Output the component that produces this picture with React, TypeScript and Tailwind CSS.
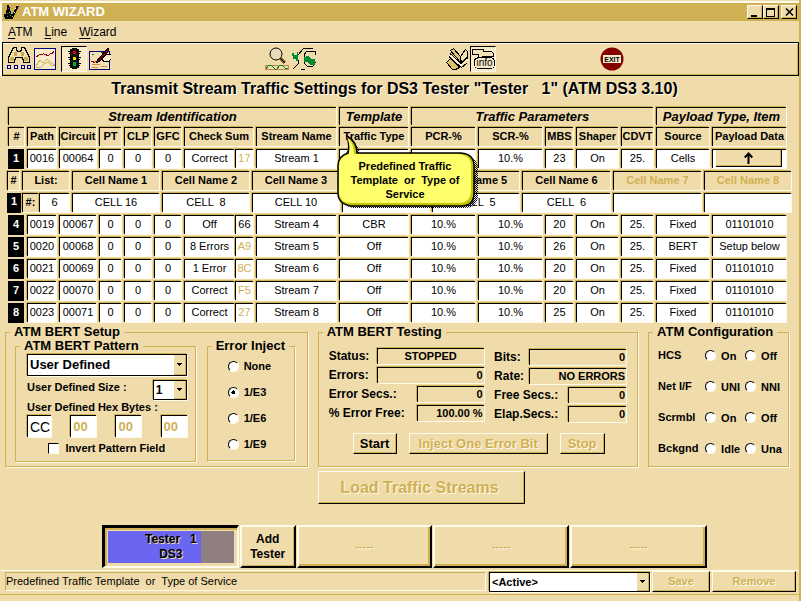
import React from "react";

const cellBox =
  "flex h-[19px] items-center justify-center overflow-hidden whitespace-pre border-l border-t border-black px-px pb-[3px] text-[11px] leading-[14px] shadow-[-1px_-1px_#cfb053,1px_1px_#fffbe6]";
const raised =
  "border-2 border-t-[#fffbea] border-l-[#fffbea] border-r-black border-b-black shadow-[inset_-1px_-1px_#cfb053]";
const raisedThin =
  "border border-t-[#fffbea] border-l-[#fffbea] border-r-black border-b-black shadow-[inset_-1px_-1px_#cfb053]";
const engraved = "text-[#cfb053] [text-shadow:1px_1px_#fffbea]";

const streamCols = [19, 32, 40, 25, 30, 30, 51, 21, 83, 72, 67, 67, 31, 45, 35, 56, 77];
const cellCols = [15, 17, 33, 90, 90, 90, 90, 90, 91, 91, 90];

type Stream = { id: number; values: string[]; sumActive?: boolean };

const firstStream: Stream = {
  id: 1,
  values: ["0016", "00064", "0", "0", "0", "Correct", "17", "Stream 1", "", "", "10.%", "23", "On", "25.", "Cells"],
};
const streams: Stream[] = [
  { id: 4, sumActive: true, values: ["0019", "00067", "0", "0", "0", "Off", "66", "Stream 4", "CBR", "10.%", "10.%", "20", "On", "25.", "Fixed", "01101010"] },
  { id: 5, values: ["0020", "00068", "0", "0", "0", "8 Errors", "A9", "Stream 5", "Off", "10.%", "10.%", "26", "On", "25.", "BERT", "Setup below"] },
  { id: 6, values: ["0021", "00069", "0", "0", "0", "1 Error", "8C", "Stream 6", "Off", "10.%", "10.%", "20", "On", "25.", "Fixed", "01101010"] },
  { id: 7, values: ["0022", "00070", "0", "0", "0", "Correct", "F5", "Stream 7", "Off", "10.%", "10.%", "20", "On", "25.", "Fixed", "01101010"] },
  { id: 8, values: ["0023", "00071", "0", "0", "0", "Correct", "27", "Stream 8", "Off", "10.%", "10.%", "25", "On", "25.", "Fixed", "01101010"] },
];

function Cols({ widths }: { widths: number[] }) {
  const total = widths.reduce((a, b) => a + b, 0);
  return (
    <colgroup>
      {widths.map((w, i) => (
        <col key={i} style={{ width: `${(w / total) * 100}%` }} />
      ))}
    </colgroup>
  );
}

function Head({ children, span = 1, dim = false }: { children: React.ReactNode; span?: number; dim?: boolean }) {
  return (
    <th colSpan={span} className="h-[22px] p-0 pr-[3px] align-top font-bold">
      <div className={`${cellBox} ${dim ? "text-[#cfb053]" : ""}`}>{children}</div>
    </th>
  );
}

function GroupHead({ children, span }: { children: React.ReactNode; span: number }) {
  return (
    <th colSpan={span} className="h-[20px] p-0 pr-[3px] align-top">
      <div className="h-[18px] whitespace-nowrap border-l border-t border-black text-center text-[13px] font-bold italic leading-[17px] shadow-[-1px_-1px_#cfb053,1px_0_#fffbe6]">
        {children}
      </div>
    </th>
  );
}

function RowNumber({ n }: { n: number }) {
  return (
    <th className="h-[22px] p-0 pr-[3px] align-top">
      <div className="flex h-[20px] items-center justify-center bg-black pb-[2px] text-[11px] font-bold leading-[14px] text-white">{n}</div>
    </th>
  );
}

function Cell({ children, dim = false, tight = false }: { children?: React.ReactNode; dim?: boolean; tight?: boolean }) {
  return (
    <td className={`h-[22px] p-0 align-top ${tight ? "pr-px" : "pr-[3px]"}`}>
      <div className={`${cellBox} bg-white ${dim ? "text-[#cfb053]" : "text-black"}`}>{children}</div>
    </td>
  );
}

function StreamRow({ stream, children }: { stream: Stream; children?: React.ReactNode }) {
  return (
    <tr>
      <RowNumber n={stream.id} />
      {stream.values.map((v, i) => (
        <Cell key={i} tight={i === 5} dim={i === 6 && !stream.sumActive}>
          {v}
        </Cell>
      ))}
      {children}
    </tr>
  );
}

function StreamTables() {
  return (
    <div className="relative">
      <div className="pl-2 pr-[10px]">
        <table className="w-full table-fixed border-separate border-spacing-0">
          <Cols widths={streamCols} />
          <thead>
            <tr>
              <GroupHead span={9}>Stream Identification</GroupHead>
              <GroupHead span={1}>Template</GroupHead>
              <GroupHead span={5}>Traffic Parameters</GroupHead>
              <GroupHead span={2}>Payload Type, Item</GroupHead>
            </tr>
            <tr>
              <Head>#</Head>
              <Head>Path</Head>
              <Head>Circuit</Head>
              <Head>PT</Head>
              <Head>CLP</Head>
              <Head>GFC</Head>
              <Head span={2}>Check Sum</Head>
              <Head>Stream Name</Head>
              <Head>Traffic Type</Head>
              <Head>PCR-%</Head>
              <Head>SCR-%</Head>
              <Head>MBS</Head>
              <Head>Shaper</Head>
              <Head>CDVT</Head>
              <Head>Source</Head>
              <Head>Payload Data</Head>
            </tr>
          </thead>
          <tbody>
            <StreamRow stream={firstStream}>
              <td className="h-[22px] p-0 pr-[3px] align-top">
                <div className="flex h-[19px] border-l border-t border-black bg-white pl-[3px] pr-1 shadow-[-1px_-1px_#cfb053,1px_1px_#fffbe6]">
                  <button aria-label="Payload data" className="flex h-[17px] w-full items-center justify-center border-b border-r border-black bg-[#f0dcaa] shadow-[inset_-1px_-1px_#cfb053]">
                    <svg width="9" height="12" viewBox="0 0 9 12" fill="none" stroke="#000" strokeWidth="2">
                      <path d="M4.500 12V1M.7 5.500 4.500 1.500 8.300 5.500" />
                    </svg>
                  </button>
                </div>
              </td>
            </StreamRow>
          </tbody>
        </table>
      </div>
      <div className="pl-[7px] pr-[5px]">
        <table className="w-full table-fixed border-separate border-spacing-0">
          <Cols widths={cellCols} />
          <thead>
            <tr>
              <Head>#</Head>
              <Head span={2}>List:</Head>
              {[1, 2, 3, 4, 5, 6, 7, 8].map((n) => (
                <Head key={n} dim={n > 6}>{`Cell Name ${n}`}</Head>
              ))}
            </tr>
          </thead>
          <tbody>
            <tr>
              <th className="h-[22px] p-0 pr-px align-top">
                <div className="h-[20px] bg-black text-center text-[11px] font-bold leading-[17px] text-white">1</div>
              </th>
              <th className="h-[22px] p-0 pr-px align-top">
                <div className={cellBox}>#:</div>
              </th>
              {["6", "CELL 16", "CELL  8", "CELL 10", "", "CELL  5", "CELL  6", "", ""].map((c, i) => (
                <Cell key={i}>{c}</Cell>
              ))}
            </tr>
          </tbody>
        </table>
      </div>
      <div className="pl-2 pr-[10px]">
        <table className="w-full table-fixed border-separate border-spacing-0">
          <Cols widths={streamCols} />
          <tbody>
            {streams.map((s) => (
              <StreamRow key={s.id} stream={s} />
            ))}
          </tbody>
        </table>
      </div>
      <div role="tooltip" className="absolute left-[337px] top-[28px] h-[74px] w-[142px]">
        <svg className="absolute inset-0" width="142" height="74" viewBox="0 0 142 74">
          <defs>
            <pattern id="halftone" width="2" height="2" patternUnits="userSpaceOnUse">
              <path d="M0 0h1v1H0zM1 1h1v1H1z" fill="#000" />
            </pattern>
          </defs>
          <path d="M13 4Q22 10 23 20H127Q141 22 141 34V60Q141 73 127 73H17Q8 72 5 65V34Z" fill="url(#halftone)" />
          <path d="M10 1Q20 7 20 18H124Q137 19 137 31V58Q137 71 124 71H14Q1 69 1 58V31Q1 21 11 18Q13 10 10 1Z" fill="#c6c600" stroke="#000" strokeWidth="1.500" />
          <path d="M10 2Q17 8 17 19H121Q134 20 134 31V55Q134 68 121 68H14Q2 68 2 56V31Q2 22 12 19Q14 11 10 2Z" fill="#ffff6b" />
        </svg>
        <p className="relative whitespace-pre pr-[6px] pt-[24px] text-center text-[11px] font-bold leading-[14px]">
          {"Predefined Traffic\nTemplate  or  Type of\nService"}
        </p>
      </div>
    </div>
  );
}

function Group({ title, className = "", children }: { title: string; className?: string; children: React.ReactNode }) {
  return (
    <fieldset className={`min-w-0 border border-[#cfb053] shadow-[1px_1px_#fffbea] ${className}`}>
      <legend className="ml-1 whitespace-nowrap px-1 text-[13px] font-bold leading-[14px]">{title}</legend>
      {children}
    </fieldset>
  );
}

const radioStyle =
  "m-0 h-[11px] w-[11px] shrink-0 appearance-none rounded-full border border-b-[#fffbea] border-l-black border-r-[#fffbea] border-t-black bg-white checked:bg-[radial-gradient(#000_2px,#fff_2px)]";

function Radio({ name, label, checked = false }: { name: string; label: string; checked?: boolean }) {
  return (
    <label className="flex items-center gap-[5px] whitespace-nowrap text-[11px] font-bold leading-[14px]">
      <input type="radio" name={name} defaultChecked={checked} className={radioStyle} />
      {label}
    </label>
  );
}

function Select({ id, label, value, className }: { id: string; label: string; value: string; className: string }) {
  return (
    <div className={`relative border border-black bg-white shadow-[-1px_-1px_#cfb053,1px_1px_#fffbea] ${className}`}>
      <select id={id} aria-label={label} defaultValue={value} className="block h-full w-full appearance-none bg-transparent pl-[2px] font-bold outline-none">
        <option>{value}</option>
      </select>
      <span className="pointer-events-none absolute inset-y-0 right-0 flex w-3 items-center justify-center border-b border-r border-[#cfb053] bg-[#f0dcaa]">
        <svg width="5" height="3" viewBox="0 0 5 3" shapeRendering="crispEdges">
          <path d="M0 0h5v1H4v1H3v1H2V2H1V1H0z" />
        </svg>
      </span>
    </div>
  );
}

function HexByte({ index, value, active = false }: { index: number; value: string; active?: boolean }) {
  return (
    <input
      aria-label={`Hex byte ${index}`}
      defaultValue={value}
      disabled={!active}
      className={`h-[22px] border-l border-t border-black bg-white pl-[2px] shadow-[-1px_-1px_#cfb053,1px_1px_#fffbea] ${active ? "w-6 text-[14px]" : "w-[26px] text-[13px] font-bold text-[#cfb053]"}`}
    />
  );
}

function Readout({ label, value, width, center = false }: { label: string; value: string; width: string; center?: boolean }) {
  const id = label.replace(/\W/g, "");
  return (
    <div className="flex h-[17px] items-center justify-between">
      <label htmlFor={id} className="whitespace-nowrap text-[12px] font-bold leading-[14px]">
        {label}
      </label>
      <output
        id={id}
        className={`h-4 whitespace-nowrap border-l border-t border-black text-[11px] font-bold leading-[15px] shadow-[-1px_-1px_#cfb053,1px_1px_#fffbea] ${width} ${center ? "text-center" : "pr-px text-right"}`}
      >
        {value}
      </output>
    </div>
  );
}

function BertSetup() {
  return (
    <Group title="ATM BERT Setup" className="min-h-[142px] flex-[303_1_0%]">
      <div className="flex items-start gap-[11px] pl-[9px] pr-3">
        <Group title="ATM BERT Pattern" className="h-[123px] flex-1">
          <div className="flex flex-col pl-[11px] pr-2">
            <Select id="pattern" label="Pattern" value="User Defined" className="mt-px h-[22px] w-full max-w-[160px] text-[13px]" />
            <div className="mt-1 flex max-w-[160px] items-start justify-between">
              <label htmlFor="size" className="whitespace-nowrap text-[11px] font-bold leading-[14px]">
                User Defined Size :
              </label>
              <Select id="size" label="User Defined Size" value="1" className="h-[20px] w-[34px] text-[12px]" />
            </div>
            <span className="text-[11px] font-bold leading-[14px]">User Defined Hex Bytes :</span>
            <div className="mt-px flex max-w-[160px] justify-between">
              <HexByte index={1} value="CC" active />
              <HexByte index={2} value="00" />
              <HexByte index={3} value="00" />
              <HexByte index={4} value="00" />
            </div>
            <label className="mt-1 flex items-center gap-[6px] self-center whitespace-nowrap text-[11px] font-bold leading-[14px]">
              <input type="checkbox" className="h-[11px] w-[11px] appearance-none border border-b-[#fffbea] border-l-black border-r-[#fffbea] border-t-black bg-white" />
              Invert Pattern Field
            </label>
          </div>
        </Group>
        <Group title="Error Inject" className="h-[122px] w-[88px]">
          <div className="flex flex-col gap-3 pl-5 pt-[6px]">
            <Radio name="inject" label="None" />
            <Radio name="inject" label="1/E3" checked />
            <Radio name="inject" label="1/E6" />
            <Radio name="inject" label="1/E9" />
          </div>
        </Group>
      </div>
    </Group>
  );
}

function BertTesting() {
  return (
    <Group title="ATM BERT Testing" className="min-h-[142px] flex-[321_1_0%]">
      <div className="flex justify-between pl-[10px] pr-[11px] pt-2">
        <div className="flex w-[155px] flex-col gap-[2px]">
          <Readout label="Status:" value="STOPPED" width="w-[107px]" center />
          <Readout label="Errors:" value="0" width="w-[107px]" />
          <Readout label="Error Secs.:" value="0" width="w-[67px]" />
          <Readout label="% Error Free:" value="100.00 %" width="w-[67px]" />
        </div>
        <div className="flex w-[132px] flex-col gap-[2px] pt-px">
          <Readout label="Bits:" value="0" width="w-[97px]" />
          <Readout label="Rate:" value="NO ERRORS" width="w-[97px]" />
          <Readout label="Free Secs.:" value="0" width="w-[58px]" />
          <Readout label="Elap.Secs.:" value="0" width="w-[58px]" />
        </div>
      </div>
      <div className="flex gap-3 pl-[34px] pt-[11px] text-[13px] font-bold leading-[16px]">
        <button className={`h-[21px] w-[44px] whitespace-nowrap ${raisedThin}`}>Start</button>
        <button disabled className={`h-[21px] w-[139px] whitespace-nowrap ${raisedThin} ${engraved}`}>
          Inject One Error Bit
        </button>
        <button disabled className={`h-[21px] w-[45px] whitespace-nowrap ${raisedThin} ${engraved}`}>
          Stop
        </button>
      </div>
    </Group>
  );
}

const configRows: [string, string, string][] = [
  ["HCS", "On", "Off"],
  ["Net I/F", "UNI", "NNI"],
  ["Scrmbl", "On", "Off"],
  ["Bckgnd", "Idle", "Una"],
];

function Configuration() {
  return (
    <Group title="ATM Configuration" className="min-h-[142px] flex-[140_1_0%]">
      <div className="flex flex-col gap-4 pl-[9px] pt-[9px]">
        {configRows.map(([name, a, b]) => (
          <div key={name} role="radiogroup" aria-label={name} className="flex items-center text-[11px] font-bold leading-[15px]">
            <span className="w-[47px] whitespace-nowrap">{name}</span>
            <div className="w-10">
              <Radio name={name} label={a} />
            </div>
            <Radio name={name} label={b} />
          </div>
        ))}
      </div>
    </Group>
  );
}

function IconButton({ label, pressed = false, children }: { label: string; pressed?: boolean; children: React.ReactNode }) {
  return (
    <button
      aria-label={label}
      className={`flex h-[26px] w-[26px] items-center justify-center ${pressed ? "border border-b-[#fffbea] border-l-black border-r-[#fffbea] border-t-black bg-[#f7ebca]" : ""}`}
    >
      <svg width="24" height="24" viewBox="0 0 24 24" fill="none" stroke="#000" shapeRendering="crispEdges">
        {children}
      </svg>
    </button>
  );
}

function Toolbar() {
  return (
    <div className="flex h-[34px] items-center border border-black px-[3px] shadow-[inset_0_1px_#fffbea,inset_-1px_-1px_#cfb053]" role="toolbar">
      <div className="flex flex-1">
        <IconButton label="Find">
          <path d="M1.500 15.500V9.500H2.500V7.500H3.500V5.500H4.500V3.500H5.500V1.500H6.500V.5H9.500V3.500H10.500V4.500H13.500V3.500H14.500V.5H17.500V1.500H18.500V3.500H19.500V5.500H20.500V7.500H21.500V9.500H22.500V15.500H16.500V12.500H15.500V10.500H8.500V12.500H7.500V15.500Z" fill="#f2e2b5" />
          <path d="M3 10h4v4H3zM17 10h4v4h-4zM7 5h3v4H7zM14 5h3v4h-3z" fill="#d0ab4c" stroke="none" />
          <path d="M.5 18.500h3v3h-3zM7.500 18.500h3v3h-3zM14.500 18.500h3v3h-3zM20.500 18.500h3v3h-3z" stroke="#000080" fill="#f7ebca" />
        </IconButton>
        <IconButton label="Graph">
          <path d="M1.500 1.500h21v21h-21z" stroke="#000080" fill="#f7ebca" />
          <path d="M3 9.500h2M4 8.500h2M6 7.500h4M10 6.500h1M11 7.500h3M13 8.500h3M16 7.500h1M17 6.500h3M19 5.500h2M20 4.500h1" stroke="#900000" />
          <path d="M3 19l4-6 3 3 4-4 3 3 5 3M3 20h5l3-3 4-2 3 3 4 1" stroke="#cfb053" />
        </IconButton>
        <div className="w-[3px]" />
        <IconButton label="Traffic" pressed>
          <path d="M8 2h9v19H8z" fill="#111" stroke="none" />
          <path d="M6 4.500h13M7 6.500h11M6 10.500h13M7 12.500h11M6 16.500h13M7 18.500h11M10 1.500h5M10 21.500h5" />
          <path d="M11 4h3v3h-3z" fill="#e00000" stroke="none" />
          <path d="M11 10h3v3h-3z" fill="#f0e000" stroke="none" />
          <path d="M11 15h3v4h-3z" fill="#00b030" stroke="none" />
        </IconButton>
        <IconButton label="Edit">
          <path d="M1.500 4.500h20v18h-20z" fill="#f2e2b5" stroke="#000080" />
          <path d="M4 17.500h8M4 20.500h6M13 19.500h6" stroke="#cf8a40" />
          <path d="M4 7.500h2M13 5.500h3" stroke="#007030" />
          <path d="M23 7.500h-4l-3 2-2 3 2 2h4l3-2" fill="#f7ebca" />
          <path d="M8 15L18 3l2-2 1 1-2 4-7 8-4 2z" fill="#800000" />
          <path d="M3 15l2-1 1 2 2-2" stroke="#a00000" />
        </IconButton>
      </div>
      <div className="flex w-[180px] gap-px">
        <IconButton label="Inspect">
          <circle cx="11" cy="7" r="6" fill="#e8dcb8" shapeRendering="auto" />
          <path d="M15 11l5 5" stroke="#8a6a20" strokeWidth="3" />
          <path d="M15 11l5 5" />
          <path d="M.5 18.500h23v4H.5z" stroke="#c6884a" />
          <path d="M1 22l3-4 3 1 3 3h2l3-4h2l3 3h3" stroke="#008030" />
        </IconButton>
        <IconButton label="Connect">
          <path d="M0 6h2v2h3V5h1v9H4v-2H1z" fill="#008a30" stroke="none" />
          <path d="M6 8l6-7h9M6 13v4l-5 5M12 8l3-4h8l1 4M12 8v8l3 3h6l3-4M9 23l4-1" />
          <path d="M12 10l4-1 3 3h4v6h-5l-3-3h-3z" fill="#008a30" stroke="none" />
        </IconButton>
      </div>
      <div className="flex w-[155px]">
        <IconButton label="Manuals">
          <path d="M5.500 3.500l3-2 7 8v6z" fill="#dcc071" />
          <path d="M15.500 9.500l5-7 2 2v5l-6 6z" fill="#f2e2b5" />
          <path d="M1.500 15.500l4-4 9 9-4 2h-3z" fill="#dcc071" />
          <path d="M5 6.500l11 10 7-6M4 9.500l11 10 8-7M16 21l6-5" />
          <path d="M6 8.500l10 10 7-6" stroke="#fff8df" />
        </IconButton>
        <IconButton label="Info" pressed>
          <path d="M1.500 2.500h11v2h8l2 2v3h-11v2h-4v-4h-6z" fill="#f2e2b5" />
          <rect x="3.500" y="10.500" width="20" height="11" rx="4" fill="#f7ebca" />
          <text x="13.500" y="19" textAnchor="middle" fontSize="10" fontFamily="Liberation Sans, sans-serif" fill="#000" stroke="none">
            info
          </text>
        </IconButton>
      </div>
      <div className="w-[196px]">
        <IconButton label="Exit">
          <circle cx="12" cy="12" r="11.500" fill="#850000" stroke="none" shapeRendering="auto" />
          <path d="M3 8h18v8H3z" fill="#f7ebca" stroke="none" />
          <text x="12" y="15" textAnchor="middle" fontSize="7" fontWeight="bold" fontFamily="Liberation Sans, sans-serif" fill="#000" stroke="none">
            EXIT
          </text>
        </IconButton>
      </div>
    </div>
  );
}

function TitleBar() {
  const button = "flex h-[14px] w-4 items-center justify-center border border-b-black border-l-[#fffbea] border-r-black border-t-[#fffbea] bg-[#f0dcaa] shadow-[inset_-1px_-1px_#cfb053]";
  return (
    <header className="flex h-[18px] items-center bg-[#cfb053] px-[2px]">
      <svg width="16" height="16" viewBox="0 0 16 16" shapeRendering="crispEdges" aria-hidden="true">
        <path d="M3 1h2v2h1v4h1v3h3v3H9v2H1v-2H0v-3h2V6h1z" />
        <path d="M8 11l5-10 2 1-5 10z" />
        <path d="M4 4h1v1H4zM3 9h1v1H3z" fill="#3f4fff" />
        <path d="M5 8h1v1H5zM8 12h1v1H8z" fill="#f0e000" />
        <path d="M3 12h1v1H3zM6 11h1v1H6z" fill="#00c040" />
        <path d="M13 1h1v1h-1zM11 4h1v1h-1zM10 8h1v1h-1z" fill="#fff" />
      </svg>
      <h1 className="ml-[2px] flex-1 text-[13px] font-bold leading-[16px] text-white">ATM WIZARD</h1>
      <button aria-label="Minimize" className={button}>
        <svg width="10" height="9" viewBox="0 0 10 9"><path d="M1 7h6v2H1z" /></svg>
      </button>
      <button aria-label="Maximize" className={button}>
        <svg width="10" height="9" viewBox="0 0 10 9" fill="none" stroke="#000" shapeRendering="crispEdges"><path d="M.5 .5h8v8h-8zM.5 1.500h8" /></svg>
      </button>
      <button aria-label="Close" className={`${button} ml-[2px]`}>
        <svg width="9" height="8" viewBox="0 0 9 8" fill="none" stroke="#000" strokeWidth="1.500"><path d="M1 .5l7 7M8 .5l-7 7" /></svg>
      </button>
    </header>
  );
}

function MenuItem({ hot, rest }: { hot: string; rest: string }) {
  return (
    <button className="text-[12px] leading-[20px]">
      <span className="underline underline-offset-2">{hot}</span>
      {rest}
    </button>
  );
}

function TesterBar() {
  const slot =
    "h-[43px] border-2 border-b-black border-l-[#fffbea] border-r-black border-t-[#fffbea] text-[11px] font-bold shadow-[inset_-2px_-2px_#cfb053]";
  return (
    <div className="mt-[21px] grid grid-cols-[137fr_56fr_136fr_136fr_137fr] gap-px pl-[102px] pr-[92px]">
      <button className="h-[43px] border-b-2 border-l-[3px] border-r-2 border-t-[3px] border-b-[#fffbea] border-l-black border-r-[#fffbea] border-t-black px-[3px] py-[3px] shadow-[inset_2px_2px_#cfb053]">
        <span className="flex h-full items-center justify-center whitespace-pre bg-[linear-gradient(to_right,#6a66f2_74%,#8f7f80_74%)] text-center text-[12px] font-bold leading-[15px] [text-shadow:1px_1px_#e8d69f]">
          {"Tester   1\nDS3"}
        </span>
      </button>
      <button className={`h-[43px] text-center text-[12px] font-bold leading-[15px] ${raised}`}>
        Add
        <br />
        Tester
      </button>
      <button disabled className={`${slot} ${engraved}`}>-----</button>
      <button disabled className={`${slot} ${engraved}`}>-----</button>
      <button disabled className={`${slot} ${engraved}`}>-----</button>
    </div>
  );
}

function StatusBar() {
  return (
    <footer className="mt-[2px] flex border-t border-[#fffbea] pl-[5px] pr-[3px]">
      <p className="mr-[3px] mt-px h-[19px] flex-1 whitespace-pre border border-b-[#fffbea] border-l-[#cfb053] border-r-[#fffbea] border-t-[#cfb053] text-[11px] leading-[16px]">
        Predefined Traffic Template  or  Type of Service
      </p>
      <Select id="active" label="Active configuration" value="<Active>" className="mt-px h-5 w-[161px] text-[11px]" />
      <button disabled className={`ml-[2px] h-[21px] w-[58px] text-[11px] font-bold ${raisedThin} ${engraved}`}>Save</button>
      <button disabled className={`ml-[2px] h-[21px] w-[84px] text-[11px] font-bold ${raisedThin} ${engraved}`}>Remove</button>
    </footer>
  );
}

export default function App() {
  return (
    <div className="min-h-screen border-r-2 border-[#cfb053] bg-[#f0dcaa] pt-px font-['Liberation_Sans',Arial,sans-serif] text-black">
      <div className="border-l-2 border-t-2 border-[#fffbea]">
        <TitleBar />
        <nav className="flex h-[21px] gap-3 pl-[6px]">
          <MenuItem hot="A" rest="TM" />
          <MenuItem hot="L" rest="ine" />
          <MenuItem hot="W" rest="izard" />
        </nav>
        <Toolbar />
      </div>
      <h2 className="mb-[9px] mt-1 whitespace-pre pr-[10px] text-center text-[16px] font-bold leading-[18px] [text-shadow:1px_1px_#fffbea]">
        {'Transmit Stream Traffic Settings for DS3 Tester "Tester   1" (ATM DS3 3.10)'}
      </h2>
      <StreamTables />
      <div className="flex gap-[10px] pl-[5px] pr-[10px]">
        <BertSetup />
        <BertTesting />
        <Configuration />
      </div>
      <div className="pl-[318px] pt-1">
        <button disabled className={`h-[33px] w-[207px] pr-1 text-[16px] font-bold leading-[18px] ${raisedThin} ${engraved}`}>
          Load Traffic Streams
        </button>
      </div>
      <TesterBar />
      <StatusBar />
      <div className="mt-[2px] border-t border-[#cfb053]" />
    </div>
  );
}
